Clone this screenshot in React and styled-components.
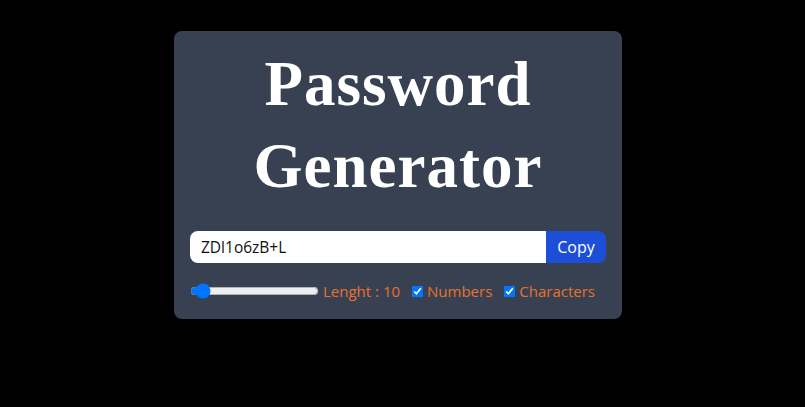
import styled, {createGlobalStyle} from "styled-components";

const GlobalStyle = createGlobalStyle`
  html, body {
    margin: 0;
    padding: 0;
    background: #000;
  }
  body {
    font-family: "Open Sans", "Noto Sans", sans-serif;
  }
`;

const Page = styled.div`
  width: 805px;
  height: 407px;
  padding: 31px 0 0 174px;
  box-sizing: border-box;
`;

const Card = styled.div`
  width: 448px;
  box-sizing: border-box;
  background-color: #374151;
  border-radius: 8px;
  padding: 12px 16px 18px;
`;

const Title = styled.h1`
  margin: 0 0 24px;
  text-align: center;
  color: #fff;
  font-family: "Liberation Serif", serif;
  font-weight: bold;
  font-size: 63px;
  line-height: 82px;
  letter-spacing: 1px;
`;

const InputRow = styled.div`
  display: flex;
  height: 32px;
  border-radius: 8px;
  overflow: hidden;
  margin-bottom: 18px;
`;

const PasswordInput = styled.input`
  flex: 1;
  border: none;
  outline: none;
  padding: 0 11px;
  font-family: "Open Sans", "Noto Sans", sans-serif;
  font-size: 15.5px;
  color: #111;
  background: #fff;
`;

const CopyButton = styled.button`
  width: 60px;
  border: none;
  background-color: #1d4ed8;
  color: #fff;
  font-family: "Open Sans", "Noto Sans", sans-serif;
  font-size: 16px;
  padding: 0;
`;

const Options = styled.div`
  display: flex;
  align-items: center;
  gap: 12px;
  font-size: 15px;
  color: #ea702e;
`;

const Field = styled.label`
  display: flex;
  align-items: center;
  gap: 4px;
`;

const Range = styled.input`
  width: 129px;
  margin: 0;
  accent-color: #0075ff;
`;

const Check = styled.input`
  width: 11px;
  height: 11px;
  margin: 0;
  accent-color: #0075ff;
`;

function App() {
    return (
        <Page>
            <GlobalStyle/>
            <Card>
                <Title>Password Generator</Title>
                <InputRow>
                    <PasswordInput type="text" value="ZDl1o6zB+L" readOnly/>
                    <CopyButton>Copy</CopyButton>
                </InputRow>
                <Options>
                    <Field>
                        <Range type="range" min="6" max="100" defaultValue="10"/>
                        <span>Lenght : 10</span>
                    </Field>
                    <Field>
                        <Check type="checkbox" defaultChecked/>
                        <span>Numbers</span>
                    </Field>
                    <Field>
                        <Check type="checkbox" defaultChecked/>
                        <span>Characters</span>
                    </Field>
                </Options>
            </Card>
        </Page>
    );
}

export default App;
